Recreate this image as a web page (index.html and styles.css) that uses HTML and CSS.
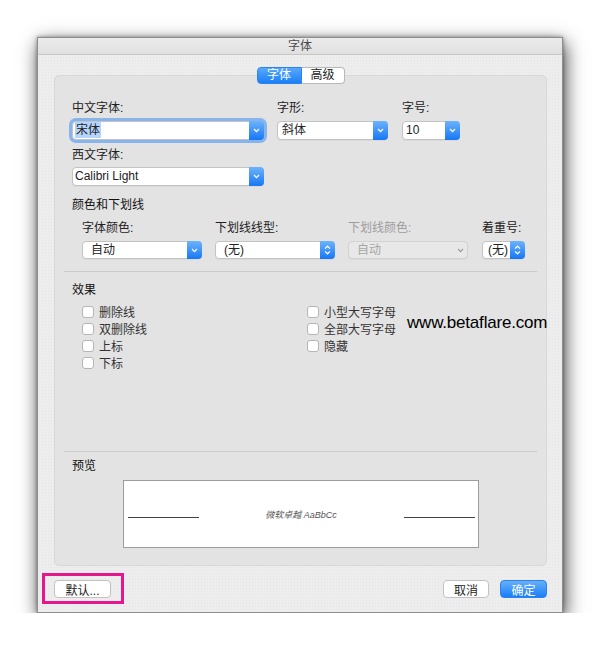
FILE: index.html
```html
<!DOCTYPE html>
<html lang="zh-CN">
<head>
    <meta charset="UTF-8">
    <title>字体</title>
    <link rel="stylesheet" href="styles.css">
</head>
<body>
    <div class="window">
        <div class="titlebar">字体</div>

        <div class="panel">
            <div class="tabs">
                <span class="tab active">字体</span><span class="tab">高级</span>
            </div>

            <div class="font-row">
                <div class="field col-cn">
                    <div class="label">中文字体:</div>
                    <div class="select focused">
                        <span class="value"><span class="selected-text">宋体</span></span>
                        <span class="arrow"><svg width="7" height="5" viewBox="0 0 7 5"><path d="M1 1 L3.5 3.6 L6 1" fill="none" stroke="#fff" stroke-width="1.3"/></svg></span>
                    </div>
                </div>
                <div class="field col-style">
                    <div class="label">字形:</div>
                    <div class="select">
                        <span class="value pad5">斜体</span>
                        <span class="arrow"><svg width="7" height="5" viewBox="0 0 7 5"><path d="M1 1 L3.5 3.6 L6 1" fill="none" stroke="#fff" stroke-width="1.3"/></svg></span>
                    </div>
                </div>
                <div class="field col-size">
                    <div class="label">字号:</div>
                    <div class="select">
                        <span class="value pad4">10</span>
                        <span class="arrow"><svg width="7" height="5" viewBox="0 0 7 5"><path d="M1 1 L3.5 3.6 L6 1" fill="none" stroke="#fff" stroke-width="1.3"/></svg></span>
                    </div>
                </div>
            </div>

            <div class="field col-cn latin">
                <div class="label">西文字体:</div>
                <div class="select">
                    <span class="value">Calibri Light</span>
                    <span class="arrow"><svg width="7" height="5" viewBox="0 0 7 5"><path d="M1 1 L3.5 3.6 L6 1" fill="none" stroke="#fff" stroke-width="1.3"/></svg></span>
                </div>
            </div>

            <div class="section-title color-title">颜色和下划线</div>
            <div class="color-row">
                <div class="field w120">
                    <div class="label">字体颜色:</div>
                    <div class="select small">
                        <span class="value pad8">自动</span>
                        <span class="arrow"><svg width="7" height="5" viewBox="0 0 7 5"><path d="M1 1 L3.5 3.6 L6 1" fill="none" stroke="#fff" stroke-width="1.3"/></svg></span>
                    </div>
                </div>
                <div class="field w120">
                    <div class="label">下划线线型:</div>
                    <div class="select small">
                        <span class="value pad8">(无)</span>
                        <span class="arrow"><svg width="7" height="10" viewBox="0 0 7 10"><path d="M1 3.6 L3.5 1.2 L6 3.6 M1 6.4 L3.5 8.8 L6 6.4" fill="none" stroke="#fff" stroke-width="1.2"/></svg></span>
                    </div>
                </div>
                <div class="field w120">
                    <div class="label disabled-text">下划线颜色:</div>
                    <div class="select small disabled">
                        <span class="value pad8">自动</span>
                        <span class="arrow plain"><svg width="7" height="5" viewBox="0 0 7 5"><path d="M1 1 L3.5 3.6 L6 1" fill="none" stroke="#999" stroke-width="1.1"/></svg></span>
                    </div>
                </div>
                <div class="field w43">
                    <div class="label">着重号:</div>
                    <div class="select small">
                        <span class="value pad6">(无)</span>
                        <span class="arrow"><svg width="7" height="10" viewBox="0 0 7 10"><path d="M1 3.6 L3.5 1.2 L6 3.6 M1 6.4 L3.5 8.8 L6 6.4" fill="none" stroke="#fff" stroke-width="1.2"/></svg></span>
                    </div>
                </div>
            </div>

            <div class="sep"></div>

            <div class="section-title effects-title">效果</div>
            <div class="effects">
                <div class="effects-col left">
                    <div class="check"><span class="box"></span>删除线</div>
                    <div class="check"><span class="box"></span>双删除线</div>
                    <div class="check"><span class="box"></span>上标</div>
                    <div class="check"><span class="box"></span>下标</div>
                </div>
                <div class="effects-col">
                    <div class="check"><span class="box"></span>小型大写字母</div>
                    <div class="check"><span class="box"></span>全部大写字母</div>
                    <div class="check"><span class="box"></span>隐藏</div>
                </div>
            </div>
            <div class="watermark">www.betaflare.com</div>

            <div class="sep preview-sep"></div>

            <div class="section-title preview-title">预览</div>
            <div class="preview">
                <span class="preview-line"></span>
                <span class="preview-text">微软卓越 AaBbCc</span>
                <span class="preview-line"></span>
            </div>
        </div>

        <div class="footer">
            <div class="highlight">
                <button class="btn">默认...</button>
            </div>
            <div class="footer-right">
                <button class="btn cancel">取消</button>
                <button class="btn primary">确定</button>
            </div>
        </div>
    </div>
</body>
</html>
```

FILE: styles.css
```css
body {
    margin: 0;
    background-color: #fff;
    font-family: "Liberation Sans", "Noto Sans CJK SC", sans-serif;
    font-size: 12px;
    color: #222;
}

.window {
    width: 524px;
    height: 574px;
    margin: 37px 0 0 37px;
    border: 1px solid #8e8e8e;
    background-color: #ededed;
    background-image: radial-gradient(rgba(0, 0, 0, 0.035) 0.6px, transparent 0.8px);
    background-size: 3px 3px;
    box-shadow: 2px 6px 18px rgba(0, 0, 0, 0.75), 0 0 4px rgba(0, 0, 0, 0.4);
}

.titlebar {
    height: 16px;
    line-height: 16px;
    text-align: center;
    color: #4a4a4a;
    background: linear-gradient(#ebebeb, #e0e0e0);
    border-bottom: 1px solid #c6c6c6;
}

/* grouped box */
.panel {
    position: relative;
    margin: 20px 15px 0 16px;
    padding: 0 17px 17px 17px;
    background-color: #e3e3e3;
    border: 1px solid #d8d8d8;
    border-radius: 5px;
}

.tabs {
    display: flex;
    justify-content: center;
    margin-top: -9px;
}

.tab {
    width: 42px;
    height: 15px;
    line-height: 15px;
    text-align: center;
    background-color: #fff;
    border: 1px solid #b9b9b9;
    border-left: none;
    border-radius: 0 4px 4px 0;
}

.tab.active {
    width: 43px;
    color: #fff;
    background: linear-gradient(#59a8fb, #1a7ff7);
    border: 1px solid #2a83f0;
    border-radius: 4px 0 0 4px;
}

.label {
    height: 14px;
    line-height: 14px;
    margin-bottom: 6px;
}

.disabled-text {
    color: #9d9d9d;
}

.font-row {
    display: flex;
    margin-top: 17px;
}

.col-cn {
    width: 192px;
}

.col-style {
    width: 111px;
    margin-left: 13px;
}

.col-size {
    width: 58px;
    margin-left: 14px;
}

.latin {
    margin-top: 8px;
}

.latin .label {
    margin-bottom: 5px;
}

.select {
    display: flex;
    height: 17px;
    background-color: #fff;
    border: 1px solid #c3c3c3;
    border-radius: 4px;
    box-shadow: 0 1px 0 rgba(0, 0, 0, 0.04);
}

.select.small {
    height: 16px;
}

.select.focused {
    box-shadow: 0 0 0 3px rgba(96, 160, 238, 0.7);
}

.value {
    flex: 1;
    line-height: 17px;
    padding-left: 2px;
    white-space: nowrap;
    overflow: hidden;
}

.small .value {
    line-height: 16px;
}

.pad4 { padding-left: 3px; }
.pad5 { padding-left: 4px; }
.pad6 { padding-left: 5px; }
.pad8 { padding-left: 8px; }

.selected-text {
    background-color: #b5d5fd;
    padding: 1px 1px;
}

.arrow {
    width: 15px;
    display: flex;
    align-items: center;
    justify-content: center;
    margin: -1px -1px -1px 0;
    background: linear-gradient(#6db3fb, #1677f5);
    border-radius: 0 4px 4px 0;
}

.arrow.plain {
    background: none;
}

.select.disabled {
    background-color: #e8e8e8;
    border-color: #d2d2d2;
    color: #a6a6a6;
}

.section-title {
    height: 14px;
    line-height: 14px;
    color: #111;
}

.color-title {
    margin-top: 12px;
}

.color-row {
    display: flex;
    margin-top: 9px;
    padding-left: 10px;
}

.w120 {
    width: 120px;
    margin-right: 13px;
}

.w120:nth-child(3) {
    margin-right: 14px;
}

.w43 {
    width: 43px;
}

.sep {
    height: 1px;
    margin: 12px -8px 0 -8px;
    background-color: #cbcbcb;
}

.effects-title {
    margin-top: 11px;
}

.effects {
    display: flex;
    margin-top: 6px;
    padding-left: 10px;
}

.effects-col.left {
    width: 225px;
}

.check {
    display: flex;
    align-items: center;
    height: 17px;
    color: #333;
}

.box {
    width: 10px;
    height: 10px;
    margin-right: 5px;
    background-color: #fff;
    border: 1px solid #b5b5b5;
    border-radius: 3px;
}

/* site watermark over the dialog */
.watermark {
    position: absolute;
    left: 352px;
    top: 237px;
    font-size: 17px;
    color: #000;
    letter-spacing: -0.2px;
}

.preview-sep {
    margin-top: 80px;
}

.preview-title {
    margin-top: 7px;
}

.preview {
    display: flex;
    align-items: center;
    justify-content: space-between;
    width: 356px;
    height: 68px;
    margin: 7px auto 0 auto;
    padding: 0 3px 0 4px;
    box-sizing: border-box;
    background-color: #fff;
    border: 1px solid #9c9c9c;
}

.preview-line {
    width: 71px;
    height: 1px;
    margin-top: 6px;
    background-color: #444;
}

.preview-text {
    font-size: 9px;
    font-style: italic;
    color: #555;
}

.footer {
    display: flex;
    align-items: center;
    justify-content: space-between;
    padding: 7px 15px 0 4px;
}

.highlight {
    padding: 4px 10px 3px 9px;
    border: 3px solid #e4188c;
}

.btn {
    display: block;
    height: 18px;
    width: 57px;
    padding: 0;
    font-family: "Liberation Sans", "Noto Sans CJK SC", sans-serif;
    font-size: 12px;
    color: #222;
    background-color: #fff;
    border: 1px solid #c2c2c2;
    border-radius: 4px;
}

.footer-right {
    display: flex;
    gap: 11px;
}

.btn.cancel {
    width: 46px;
}

.btn.primary {
    width: 47px;
    color: #fff;
    background: linear-gradient(#66b0fb, #1a7ef7);
    border-color: #2a83f0;
}
```
